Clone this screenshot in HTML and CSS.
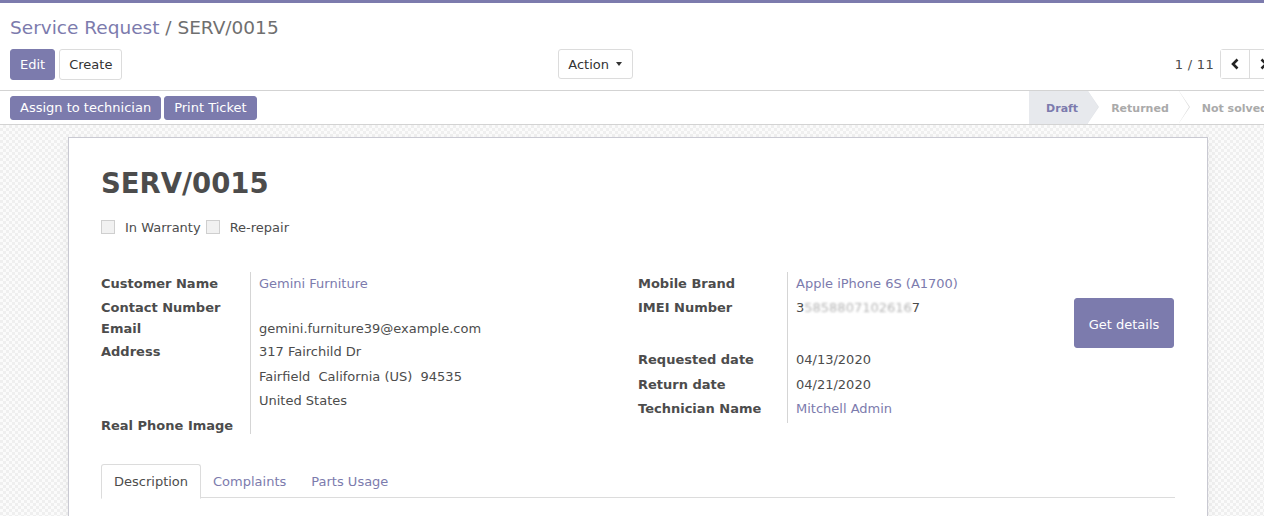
FILE: index.html
```html
<!DOCTYPE html>
<html>
<head>
<meta charset="utf-8">
<link rel="stylesheet" href="styles.css">
</head>
<body>
<div class="nav-edge"></div>
<div class="cp">
  <div class="breadcrumb"><span class="bc-link">Service Request</span><span class="bc-sep"> / </span><span class="bc-cur">SERV/0015</span></div>
  <div class="cp-row">
    <div class="cp-left">
      <div class="cp-buttons">
        <button class="btn btn-primary btn-cp">Edit</button>
        <button class="btn btn-secondary btn-cp">Create</button>
      </div>
      <button class="btn btn-secondary btn-action">Action <span class="caret"></span></button>
    </div>
    <div class="cp-right">
      <span class="pager-value">1 / 11</span>
      <div class="pager-btns">
        <button class="pager-btn"><svg width="10" height="12" viewBox="0 0 10 12"><path d="M7.5 1.5 L3 6 L7.5 10.5" fill="none" stroke="#222" stroke-width="2.6"/></svg></button>
        <button class="pager-btn"><svg width="10" height="12" viewBox="0 0 10 12"><path d="M2.5 1.5 L7 6 L2.5 10.5" fill="none" stroke="#222" stroke-width="2.6"/></svg></button>
      </div>
    </div>
  </div>
</div>
<div class="header">
  <div class="header-btns">
    <button class="btn btn-primary btn-sm">Assign to technician</button>
    <button class="btn btn-primary btn-sm">Print Ticket</button>
  </div>
  <div class="statusbar">
    <div class="seg first active">Draft</div>
    <div class="seg">Returned</div>
    <div class="seg">Not solved</div>
  </div>
</div>
<div class="sheet-bg">
  <div class="sheet">
    <h1 class="title">SERV/0015</h1>
    <div class="checks">
      <span class="cb"></span><span class="cb-label">In Warranty</span>
      <span class="cb"></span><span class="cb-label">Re-repair</span>
    </div>
    <div class="groups">
      <div class="group">
        <div class="row r-a"><div class="lbl">Customer Name</div><div class="val"><span class="link">Gemini Furniture</span></div></div>
        <div class="row r-b"><div class="lbl">Contact Number</div><div class="val"></div></div>
        <div class="row r-c"><div class="lbl">Email</div><div class="val">gemini.furniture39@example.com</div></div>
        <div class="row r-addr"><div class="lbl">Address</div><div class="val addr"><div>317 Fairchild Dr</div><div>Fairfield&nbsp; California (US)&nbsp; 94535</div><div>United States</div></div></div>
        <div class="row r-img"><div class="lbl">Real Phone Image</div><div class="val"></div></div>
      </div>
      <div class="group group-right">
        <div class="fields">
          <div class="row r-a"><div class="lbl">Mobile Brand</div><div class="val"><span class="link">Apple iPhone 6S (A1700)</span></div></div>
          <div class="row r-imei"><div class="lbl">IMEI Number</div><div class="val">3<span class="blur">5858807102616</span>7</div></div>
          <div class="row r-gap"><div class="lbl"></div><div class="val"></div></div>
          <div class="row r-req"><div class="lbl">Requested date</div><div class="val">04/13/2020</div></div>
          <div class="row r-ret"><div class="lbl">Return date</div><div class="val">04/21/2020</div></div>
          <div class="row r-tech"><div class="lbl">Technician Name</div><div class="val"><span class="link">Mitchell Admin</span></div></div>
        </div>
        <button class="btn btn-primary btn-details">Get details</button>
      </div>
    </div>
    <div class="tabs">
      <div class="tab active">Description</div>
      <div class="tab">Complaints</div>
      <div class="tab">Parts Usage</div>
    </div>
  </div>
</div>
</body>
</html>
```
FILE: styles.css
```css
* { box-sizing: border-box; }
html, body { margin: 0; padding: 0; }
body {
  width: 1264px;
  height: 516px;
  overflow: hidden;
  font-family: "DejaVu Sans", sans-serif;
  font-size: 13px;
  color: #4c4c4c;
  background: #fff;
}
button { font-family: inherit; font-size: 13px; cursor: pointer; }
.nav-edge { height: 3px; background: #7c7bad; }

.cp {
  padding: 12px 10px 10px 10px;
  border-bottom: 1px solid #d3d3d3;
}
.breadcrumb { font-size: 18.5px; line-height: 26px; height: 26px; }
.bc-link { color: #7c7bad; }
.bc-sep, .bc-cur { color: #6f6f6f; }
.cp-row { display: flex; margin-top: 8px; height: 31px; }
.cp-left { width: 623px; display: flex; justify-content: space-between; align-items: flex-start; }
.cp-buttons { display: flex; gap: 4px; }
.btn {
  border-radius: 3px;
  border: 1px solid transparent;
  padding: 0 9px;
  line-height: 1;
  white-space: nowrap;
}
.btn-primary { background: #7c7bad; color: #fff; border-color: #7c7bad; }
.btn-secondary { background: #fff; color: #333; border-color: #dcdcdc; }
.btn-cp { height: 31px; }
.btn-action { height: 30px; display: flex; align-items: center; padding: 0 10px 0 9px; color: #333; }
.caret {
  display: inline-block;
  margin-left: 7px;
  width: 0; height: 0;
  border-left: 3px solid transparent;
  border-right: 3px solid transparent;
  border-top: 4px solid #333;
}
.cp-right { flex: 1; display: flex; justify-content: flex-end; align-items: flex-start; margin-right: -24px; }
.pager-value { line-height: 32px; margin-right: 6px; color: #4c4c4c; letter-spacing: 0.3px; }
.pager-btns { display: flex; border: 1px solid #dcdcdc; border-radius: 3px; height: 30px; }
.pager-btn {
  width: 28px; height: 28px; padding: 0;
  background: #fff; border: none;
  display: flex; align-items: center; justify-content: center;
}
.pager-btn + .pager-btn { border-left: 1px solid #dcdcdc; }

.header {
  display: flex;
  height: 34px;
  border-bottom: 1px solid #d3d3d3;
  padding-left: 10px;
}
.header-btns { display: flex; gap: 3px; align-items: center; }
.btn-sm { height: 24px; padding: 0 9px; }
.statusbar { margin-left: auto; margin-right: -14px; display: flex; flex-shrink: 0; height: 33px; }
.seg {
  position: relative;
  display: flex; align-items: center;
  padding: 1px 10px 0 23px;
  font-size: 11px; font-weight: bold;
  color: #aaaaaa;
  background: #fff;
  white-space: nowrap;
}
.seg.first { padding-left: 17px; }
.seg.active { background: #e7e9ed; color: #7c7bad; }
.seg::before, .seg::after {
  content: "";
  position: absolute;
  top: 0;
  width: 0; height: 0;
  border-top: 16.5px solid transparent;
  border-bottom: 16.5px solid transparent;
}
.seg::before { right: -11px; border-left: 11px solid #dcdcdc; z-index: 1; }
.seg::after { right: -10px; border-left: 10px solid #fff; z-index: 2; }
.seg.active::before { border-left-color: #e2e4e8; }
.seg.active::after { border-left-color: #e7e9ed; }

.sheet-bg {
  height: 400px;
  padding: 12px 0 0 68px;
  background-color: #f7f7f7;
  background-image: repeating-conic-gradient(#efefef 0 25%, #fbfbfb 0 50%);
  background-size: 6px 6px;
}
.sheet {
  width: 1140px;
  min-height: 500px;
  background: #fff;
  border: 1px solid #c9c9d2;
  box-shadow: 0 4px 10px rgba(0,0,0,0.06);
  padding: 16px 32px 0 32px;
}
.title {
  margin: 12px 0 0 0;
  font-family: "DejaVu Sans", sans-serif;
  font-weight: bold;
  font-size: 27.5px;
  line-height: 34px;
  color: #4c4c4c;
}
.checks { display: flex; align-items: center; height: 20px; margin-top: 17px; }
.cb {
  width: 14px; height: 14px;
  border: 1px solid #cfcfcf;
  background: #f1f1f1;
  margin-right: 10px;
}
.cb-label { margin-right: 5px; }

.groups { display: flex; margin-top: 35px; }
.group { width: 537px; }
.group-right { display: flex; justify-content: space-between; align-items: flex-start; }
.fields { width: 420px; }
.row { display: flex; }
.lbl {
  width: 150px;
  flex-shrink: 0;
  border-right: 1px solid #d5d5d5;
  font-weight: bold;
  white-space: nowrap;
}
.val { padding-left: 8px; white-space: nowrap; }
.link { color: #7c7bad; }

.r-a { height: 24px; line-height: 23px; }
.r-b { height: 23px; line-height: 23px; }
.r-c { height: 19px; line-height: 19px; }
.r-addr { height: 75.5px; line-height: 24.5px; }
.r-addr .lbl, .r-addr .val { padding-top: 2px; }
.r-img { height: 20.5px; line-height: 24px; }
.r-imei { height: 24px; line-height: 24px; }
.r-gap { height: 28px; }
.r-req { height: 24px; line-height: 24px; }
.r-ret { height: 25px; line-height: 25px; }
.r-tech { height: 26px; line-height: 24px; }
.blur { color: #b5b5b5; filter: blur(1.2px); }

.btn-details { width: 100px; height: 50px; margin-top: 26px; margin-right: 1px; padding-top: 2px; }

.tabs {
  display: flex;
  margin-top: 30px;
  border-bottom: 1px solid #dcdcdc;
  height: 34px;
}
.tab {
  padding: 7.5px 12px 7.5px 12px;
  line-height: 18px;
  height: 35px;
  color: #7c7bad;
  border: 1px solid transparent;
  border-radius: 3px 3px 0 0;
  margin-bottom: -1px;
}
.tab + .tab { padding-left: 11px; }
.tab.active { color: #4c4c4c; border-color: #dcdcdc #dcdcdc #fff #dcdcdc; background: #fff; }
```
